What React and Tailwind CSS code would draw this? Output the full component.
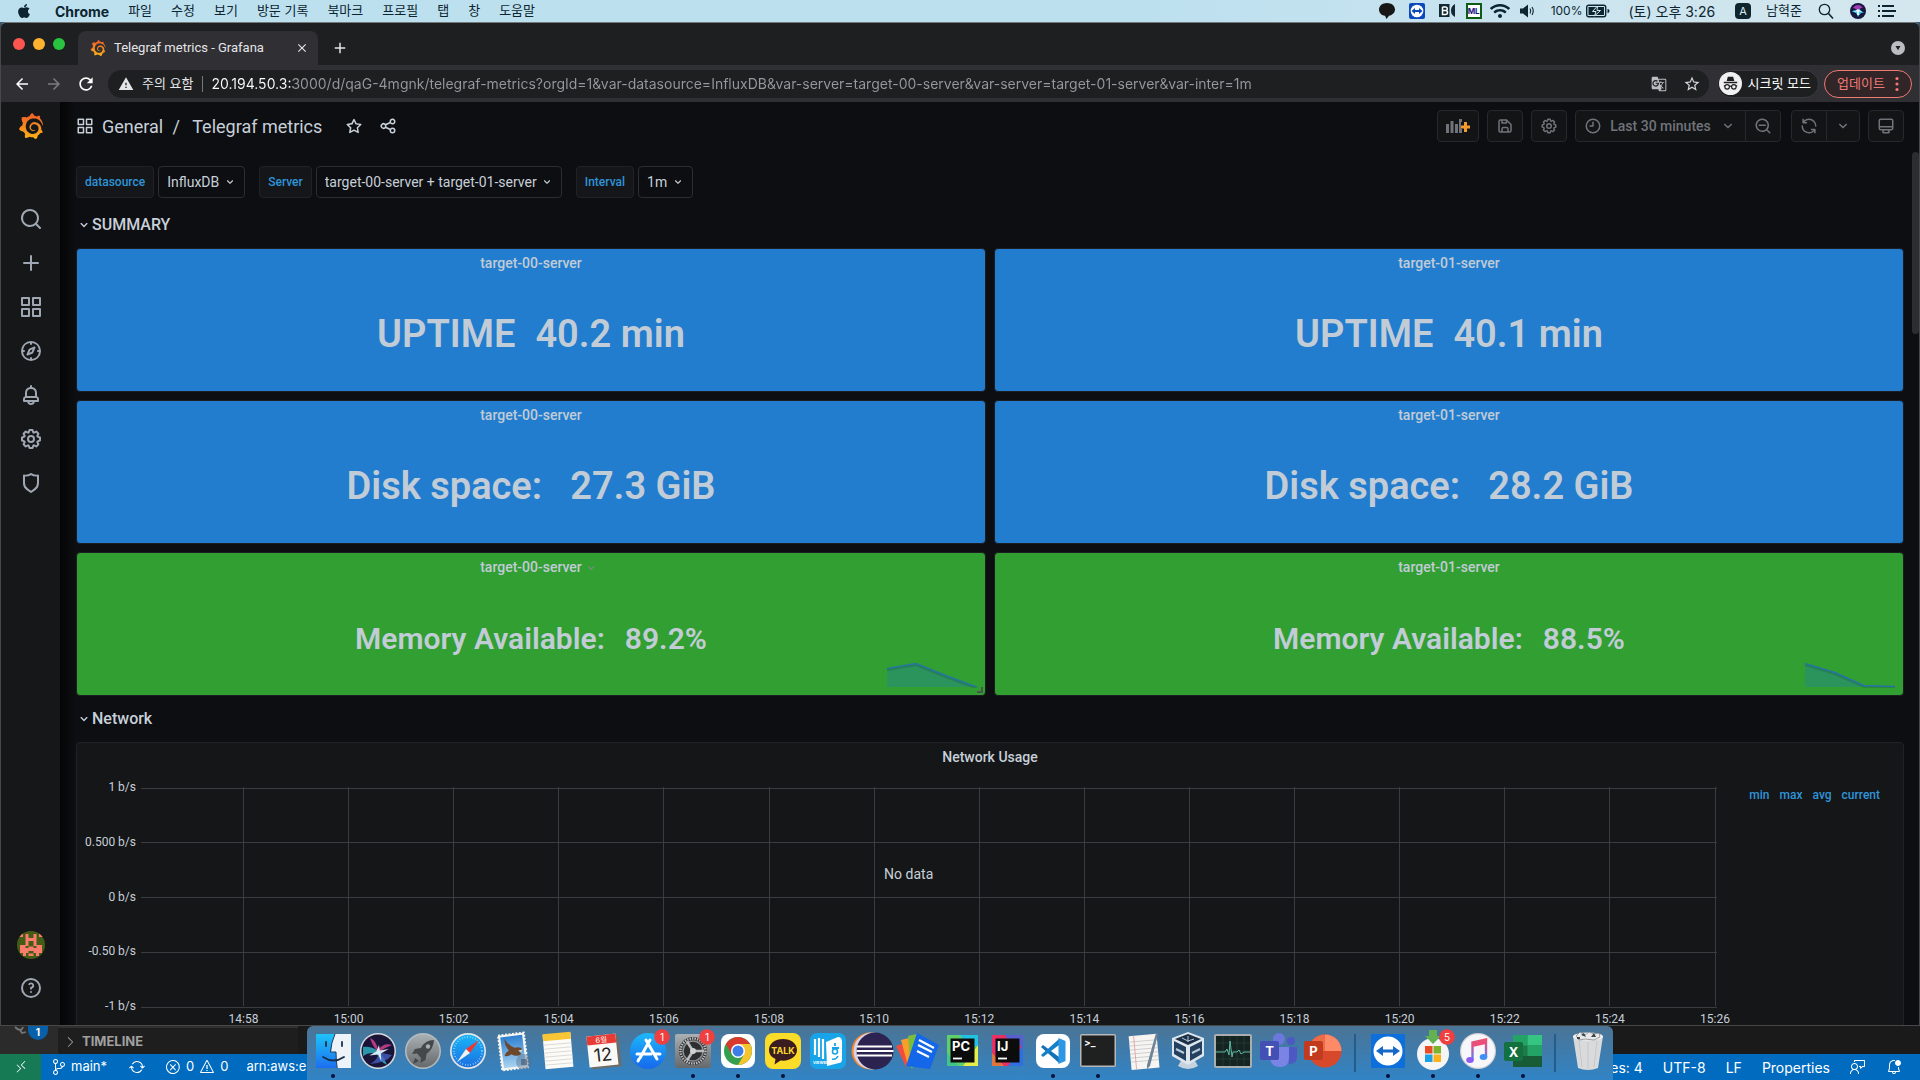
import React from "react";
import { FaApple, FaWifi } from "react-icons/fa";
import { MdGTranslate, MdStarBorder, MdWarning, MdArrowBack, MdArrowForward, MdRefresh, MdClose, MdAdd } from "react-icons/md";
import { SiGrafana } from "react-icons/si";
import { VscRemote, VscSourceControl, VscSync, VscError, VscWarning, VscFeedback, VscBellDot, VscChevronRight } from "react-icons/vsc";

const UI = "font-['Inter','Noto_Sans_CJK_KR',sans-serif]";

const paths = {
  search: "M21.71,20.29,18,16.61A9,9,0,1,0,16.61,18l3.68,3.68a1,1,0,0,0,1.42,0A1,1,0,0,0,21.71,20.29ZM11,18a7,7,0,1,1,7-7A7,7,0,0,1,11,18Z",
  plus: "M19,11H13V5a1,1,0,0,0-2,0v6H5a1,1,0,0,0,0,2h6v6a1,1,0,0,0,2,0V13h6a1,1,0,0,0,0-2Z",
  apps: "M10,13H3a1,1,0,0,0-1,1v7a1,1,0,0,0,1,1h7a1,1,0,0,0,1-1V14A1,1,0,0,0,10,13ZM9,20H4V15H9ZM21,2H14a1,1,0,0,0-1,1v7a1,1,0,0,0,1,1h7a1,1,0,0,0,1-1V3A1,1,0,0,0,21,2ZM20,9H15V4h5Zm1,4H14a1,1,0,0,0-1,1v7a1,1,0,0,0,1,1h7a1,1,0,0,0,1-1V14A1,1,0,0,0,21,13Zm-1,7H15V15h5ZM10,2H3A1,1,0,0,0,2,3v7a1,1,0,0,0,1,1h7a1,1,0,0,0,1-1V3A1,1,0,0,0,10,2ZM9,9H4V4H9Z",
  compass: "M12,2A10,10,0,1,0,22,12,10,10,0,0,0,12,2Zm1,17.93V19a1,1,0,0,0-2,0v.93A8,8,0,0,1,4.07,13H5a1,1,0,0,0,0-2H4.07A8,8,0,0,1,11,4.07V5a1,1,0,0,0,2,0V4.07A8,8,0,0,1,19.93,11H19a1,1,0,0,0,0,2h.93A8,8,0,0,1,13,19.93ZM15.14,7.55l-5,2.12a1,1,0,0,0-.52.52l-2.12,5a1,1,0,0,0,.21,1.1,1,1,0,0,0,.7.3.93.93,0,0,0,.4-.09l5-2.12a1,1,0,0,0,.52-.52l2.12-5a1,1,0,0,0-1.31-1.31Zm-2.49,5.1-2.28,1,1-2.28,2.28-1Z",
  bell: "M18,13.18V10a6,6,0,0,0-5-5.91V3a1,1,0,0,0-2,0V4.09A6,6,0,0,0,6,10v3.18A3,3,0,0,0,4,16v2a1,1,0,0,0,1,1H8.14a4,4,0,0,0,7.72,0H19a1,1,0,0,0,1-1V16A3,3,0,0,0,18,13.18ZM8,10a4,4,0,0,1,8,0v3H8Zm4,10a2,2,0,0,1-1.72-1h3.44A2,2,0,0,1,12,20Zm6-3H6V16a1,1,0,0,1,1-1H17a1,1,0,0,1,1,1Z",
  cog: "M21.32,9.55l-1.89-.63.89-1.78A1,1,0,0,0,20.13,6L18,3.87a1,1,0,0,0-1.15-.19l-1.78.89-.63-1.89A1,1,0,0,0,13.5,2h-3a1,1,0,0,0-.95.68L8.92,4.57,7.14,3.68A1,1,0,0,0,6,3.87L3.87,6a1,1,0,0,0-.19,1.15l.89,1.78-1.89.63A1,1,0,0,0,2,10.5v3a1,1,0,0,0,.68.95l1.89.63-.89,1.78A1,1,0,0,0,3.87,18L6,20.13a1,1,0,0,0,1.15.19l1.78-.89.63,1.89a1,1,0,0,0,.95.68h3a1,1,0,0,0,.95-.68l.63-1.89,1.78.89A1,1,0,0,0,18,20.13L20.13,18a1,1,0,0,0,.19-1.15l-.89-1.78,1.89-.63A1,1,0,0,0,22,13.5v-3A1,1,0,0,0,21.32,9.55ZM20,12.78l-1.2.4A2,2,0,0,0,17.64,16l.57,1.14-1.1,1.1L16,17.64a2,2,0,0,0-2.79,1.16l-.4,1.2H11.22l-.4-1.2A2,2,0,0,0,8,17.64l-1.14.57-1.1-1.1L6.36,16A2,2,0,0,0,5.2,13.18L4,12.78V11.22l1.2-.4A2,2,0,0,0,6.36,8L5.79,6.89l1.1-1.1L8,6.36A2,2,0,0,0,10.82,5.2l.4-1.2h1.56l.4,1.2A2,2,0,0,0,16,6.36l1.14-.57,1.1,1.1L17.64,8a2,2,0,0,0,1.16,2.79l1.2.4ZM12,8a4,4,0,1,0,4,4A4,4,0,0,0,12,8Zm0,6a2,2,0,1,1,2-2A2,2,0,0,1,12,14Z",
  shield: "M19.63,3.65a1,1,0,0,0-.84-.2,8,8,0,0,1-6.22-1.27,1,1,0,0,0-1.14,0A8,8,0,0,1,5.21,3.45a1,1,0,0,0-.84.2A1,1,0,0,0,4,4.43v7.45a9,9,0,0,0,3.77,7.33l3.65,2.6a1,1,0,0,0,1.16,0l3.65-2.6A9,9,0,0,0,20,11.88V4.43A1,1,0,0,0,19.63,3.65ZM18,11.88a7,7,0,0,1-2.93,5.7L12,19.77,8.93,17.58A7,7,0,0,1,6,11.88V5.58a10,10,0,0,0,6-1.39,10,10,0,0,0,6,1.39Z",
  star: "M22,9.67A1,1,0,0,0,21.14,9l-5.69-.83L12.9,3a1,1,0,0,0-1.8,0L8.55,8.16,2.86,9a1,1,0,0,0-.81.68,1,1,0,0,0,.25,1l4.13,4-1,5.68A1,1,0,0,0,6.9,21.44L12,18.77l5.1,2.67a.93.93,0,0,0,.46.12,1,1,0,0,0,.59-.19,1,1,0,0,0,.4-1l-1-5.68,4.13-4A1,1,0,0,0,22,9.67Zm-6.15,4a1,1,0,0,0-.29.88l.72,4.2-3.76-2a1.06,1.06,0,0,0-.94,0l-3.76,2,.72-4.2a1,1,0,0,0-.29-.88l-3-3,4.21-.61a1,1,0,0,0,.76-.55L12,5.7l1.88,3.82a1,1,0,0,0,.76.55l4.21.61Z",
  share: "M18,14a4,4,0,0,0-3.08,1.48l-5.1-2.35a3.64,3.64,0,0,0,0-2.26l5.1-2.35A4,4,0,1,0,14,6a4.17,4.17,0,0,0,.07.71L8.79,9.14a4,4,0,1,0,0,5.72l5.28,2.43A4.17,4.17,0,0,0,14,18a4,4,0,1,0,4-4ZM18,4a2,2,0,1,1-2,2A2,2,0,0,1,18,4ZM6,14a2,2,0,1,1,2-2A2,2,0,0,1,6,14Zm12,6a2,2,0,1,1,2-2A2,2,0,0,1,18,20Z",
  save: "M20.71,9.29l-6-6a1,1,0,0,0-.32-.21A1.09,1.09,0,0,0,14,3H6A3,3,0,0,0,3,6V18a3,3,0,0,0,3,3H18a3,3,0,0,0,3-3V10A1,1,0,0,0,20.71,9.29ZM9,5h4V7H9Zm6,14H9V16a1,1,0,0,1,1-1h4a1,1,0,0,1,1,1Zm4-1a1,1,0,0,1-1,1H17V16a3,3,0,0,0-3-3H10a3,3,0,0,0-3,3v3H6a1,1,0,0,1-1-1V6A1,1,0,0,1,6,5H7V8A1,1,0,0,0,8,9h6a1,1,0,0,0,1-1V6.41l4,4Z",
  sync: "M19.91,15.51H15.38a1,1,0,0,0,0,2h2.4A8,8,0,0,1,4,12a1,1,0,0,0-2,0,10,10,0,0,0,16.88,7.23V21a1,1,0,0,0,2,0V16.5A1,1,0,0,0,19.91,15.51ZM12,2A10,10,0,0,0,5.12,4.77V3a1,1,0,0,0-2,0V7.5a1,1,0,0,0,1,1h4.5a1,1,0,0,0,0-2H6.22A8,8,0,0,1,20,12a1,1,0,0,0,2,0A10,10,0,0,0,12,2Z",
  down: "M17,9.17a1,1,0,0,0-1.41,0L12,12.71,8.46,9.17a1,1,0,0,0-1.41,0,1,1,0,0,0,0,1.42l4.24,4.24a1,1,0,0,0,1.42,0L17,10.59A1,1,0,0,0,17,9.17Z",
  clock: "M12,2A10,10,0,1,0,22,12,10,10,0,0,0,12,2Zm0,18a8,8,0,1,1,8-8A8,8,0,0,1,12,20ZM12,6a1,1,0,0,0-1,1v4H8a1,1,0,0,0,0,2h4a1,1,0,0,0,1-1V7A1,1,0,0,0,12,6Z",
  zoomOut: "M21.71,20.29,18,16.61A9,9,0,1,0,16.61,18l3.68,3.68a1,1,0,0,0,1.42,0A1,1,0,0,0,21.71,20.29ZM11,18a7,7,0,1,1,7-7A7,7,0,0,1,11,18ZM15,10H7a1,1,0,0,0,0,2h8a1,1,0,0,0,0-2Z",
  monitor: "M19,2H5A3,3,0,0,0,2,5V15a3,3,0,0,0,3,3H7.64l-.58,1a2,2,0,0,0,0,2,2,2,0,0,0,1.75,1h6.46A2,2,0,0,0,17,21a2,2,0,0,0,0-2l-.59-1H19a3,3,0,0,0,3-3V5A3,3,0,0,0,19,2ZM8.77,20,10,18H14l1.2,2ZM20,15a1,1,0,0,1-1,1H5a1,1,0,0,1-1-1V14H20Zm0-3H4V5A1,1,0,0,1,5,4H19a1,1,0,0,1,1,1Z",
  help: "M12,2A10,10,0,1,0,22,12,10,10,0,0,0,12,2Zm0,18a8,8,0,1,1,8-8A8,8,0,0,1,12,20Zm-1-4a1,1,0,1,0,2,0a1,1,0,1,0-2,0ZM12,6.5a3,3,0,0,0-2.9,2.1l1.6.6A1.4,1.4,0,0,1,12,8.2a1.3,1.3,0,0,1,0,2.6a.9.9,0,0,0-.9.9V13.5h1.8V12.4A3,3,0,0,0,12,6.5Z",
};

function Icon({ name, className }) {
  return (
    <svg viewBox="0 0 24 24" fill="currentColor" className={className} aria-hidden="true">
      <path d={paths[name]} />
    </svg>
  );
}

/* ---------- macOS menu bar ---------- */

const menus = ["파일", "수정", "보기", "방문 기록", "북마크", "프로필", "탭", "창", "도움말"];

function MenuBar() {
  return (
    <header className={`${UI} flex h-[22px] shrink-0 items-center justify-between bg-[linear-gradient(to_right,#bde0ef_60%,#d5e7ee)] pl-4 pr-6 text-[13px] text-[#0c2530]`}>
      <nav className="flex items-center gap-[19px]">
        <button aria-label="Apple" className="mr-1"><FaApple className="size-4" /></button>
        <button className="text-[14px] font-bold">Chrome</button>
        {menus.map((m) => <button key={m}>{m}</button>)}
      </nav>
      <div className="flex items-center">
        <svg viewBox="0 0 16 16" className="mr-[14px] size-4" aria-label="KakaoTalk"><path fill="#171717" d="M8 0C3.500 0 0 2.800 0 6.500s3 6 6 6.300L7.500 16l2.500-3.300c3.500-.6 6-3 6-6.200C16 2.800 12.500 0 8 0Z" /></svg>
        <svg viewBox="0 0 16 16" className="mr-[14px] size-4" aria-label="TeamViewer"><rect width="16" height="16" rx="2" fill="#0b49bd" /><circle cx="8" cy="8" r="6.300" fill="#fff" /><path d="M2.500 8 6 5v2h4V5l3.500 3L10 11V9H6v2Z" fill="#0b49bd" /></svg>
        <svg viewBox="0 0 16 16" className="mr-[11px] size-4" aria-label="Recorder"><path fill="#122833" d="M0 1h10.500v13H0ZM16 1v13q-4-2-4-6.500T16 1Z" /><path d="M3.500 4v7.500h3a2 2 0 0 0 0-4h-3m3 0a1.700 1.700 0 0 0 0-3.500h-3" fill="none" stroke="#fff" strokeWidth="1.500" /></svg>
        <span className="mr-2 flex size-4 items-center justify-center border-2 border-[#0c5c16] bg-white text-[8px] font-bold leading-none text-[#15158a]">ML</span>
        <FaWifi className="mr-[10px] h-4 w-5" />
        <svg viewBox="0 0 16 16" className="mr-[15px] size-4" aria-label="Volume"><path d="M0 5.500h3L8 1.500v13L3 10.500H0Z" fill="currentColor" /><path d="M10 5.500q1.500 2.500 0 5M12 4q2.500 4 0 8" fill="none" stroke="currentColor" strokeWidth="1.100" /></svg>
        <span className="mr-1 text-[12px]">100%</span>
        <svg viewBox="0 0 24 14" className="mr-[18px] h-[14px] w-6" aria-label="Battery"><rect x=".7" y="1.200" width="19" height="11.600" rx="2" fill="none" stroke="currentColor" strokeWidth="1.400" /><rect x="2.500" y="3" width="15.500" height="8" fill="currentColor" /><path d="M11.500 2 6.500 7.500h3.500L8.500 12l6-5.500h-3.500Z" fill="currentColor" stroke="#d6e7ef" strokeWidth="1" /><path d="M21.500 5v4a2 2 0 0 0 0-4" fill="currentColor" /></svg>
        <span className="mr-5 text-[14px]">(토) 오후 3:26</span>
        <span className="mr-[15px] flex size-4 items-center justify-center rounded-sm bg-[#10242e] text-[11px] leading-none text-[#dbe9f0]">A</span>
        <span className="mr-4">남혁준</span>
        <svg viewBox="0 0 16 16" className="mr-4 size-4" aria-label="Spotlight"><circle cx="6.500" cy="6.500" r="5.200" fill="none" stroke="currentColor" strokeWidth="1.300" /><path d="m10.500 10.500 4.500 5" stroke="currentColor" strokeWidth="1.600" /></svg>
        <svg viewBox="0 0 16 16" className="mr-3 size-4" aria-label="Siri"><circle cx="8" cy="8" r="8" fill="#16163f" /><path d="M2 9c3-4 5 1 7-5 1 4 3 4 5 6-3-1-4 1-6 4-1-4-3-5-6-5Z" fill="#39c6ef" /><path d="M3 5c2-4 8-4 10 0-3-1-4 3-5 3S6 5 3 5Z" fill="#a23db5" /><path d="m4 9 4-3 4 3-3-.5V12H7V8.500Z" fill="#e9f6ff" /></svg>
        <svg viewBox="0 0 18 14" className="h-[14px] w-[18px]" aria-label="Notification Center"><path d="M0 2h2M4 2h12M0 7h2M4 7h14M0 12h2M4 12h12" stroke="currentColor" strokeWidth="1.800" /></svg>
      </div>
    </header>
  );
}

/* ---------- Chrome window ---------- */

const url = "20.194.50.3:3000/d/qaG-4mgnk/telegraf-metrics?orgId=1&var-datasource=InfluxDB&var-server=target-00-server&var-server=target-01-server&var-inter=1m";

function TabStrip() {
  return (
    <div className="flex h-[42px] shrink-0 items-end bg-[#1e1f21] text-[#e4e5e7]">
      <div className="mb-[15px] ml-3 flex gap-2">
        <button aria-label="Close window" className="size-3 rounded-full bg-[#fe5550]" />
        <button aria-label="Minimize window" className="size-3 rounded-full bg-[#fdb32f]" />
        <button aria-label="Zoom window" className="size-3 rounded-full bg-[#28c440]" />
      </div>
      <div className="ml-[13px] flex h-[34px] w-[240px] items-center rounded-t-lg bg-[#302f34] pl-3 pr-[9px]">
        <SiGrafana className="size-4" fill="url(#grafana)" />
        <span className="ml-2 flex-1 whitespace-nowrap font-['Roboto',sans-serif] text-[13px]">Telegraf metrics - Grafana</span>
        <button aria-label="Close tab"><MdClose className="size-[14px]" /></button>
      </div>
      <button aria-label="New tab" className="mb-2 ml-[13px]"><MdAdd className="size-[18px]" /></button>
      <button aria-label="Search tabs" className="mb-[10px] ml-auto mr-[14px] flex size-[14px] items-center justify-center rounded-full bg-[#bcbdc1]">
        <svg viewBox="0 0 8 6" className="h-[5px] w-2"><path d="M1 0h6L4 5Z" fill="#1e1f21" /></svg>
      </button>
    </div>
  );
}

function AddressBar() {
  return (
    <div className={`${UI} flex h-[37px] shrink-0 items-center bg-[#302f34] pl-3 pr-[7px] text-white`}>
      <button aria-label="Back" className="mr-[14px]"><MdArrowBack className="size-[18px]" /></button>
      <button aria-label="Forward" className="mr-[13px] text-[#7c7c80]"><MdArrowForward className="size-[18px]" /></button>
      <button aria-label="Reload" className="mr-3"><MdRefresh className="size-5" /></button>
      <div className="flex h-7 flex-1 items-center rounded-full bg-[#1e1f21] pl-[10px] pr-2">
        <MdWarning className="mr-2 size-4 text-[#e4e5e7]" />
        <span className="whitespace-nowrap text-[13px] text-[#e4e5e7]">주의 요함</span>
        <span className="ml-2 mr-[9px] h-4 w-px bg-[#77787b]" />
        <input
          aria-label="Address"
          defaultValue={url}
          className="h-5 min-w-0 flex-1 bg-[linear-gradient(to_right,#ffffff_81px,#97989c_81px)] bg-clip-text text-[14px] text-transparent outline-none"
        />
        <button aria-label="Translate" className="mr-4"><MdGTranslate className="size-4 text-[#bcbdc1]" /></button>
        <button aria-label="Bookmark"><MdStarBorder className="size-[18px] text-[#d4d5d8]" /></button>
      </div>
      <div className="ml-2 flex h-7 items-center rounded-full border border-[#3a3a3e] bg-[#1e1f21] pl-px pr-[7px] text-[13px]">
        <svg viewBox="0 0 24 24" className="mr-[6px] size-[23px]" aria-hidden="true">
          <circle cx="12" cy="12" r="12" fill="#f1f1f3" />
          <path d="M8 9.500 9.200 5h5.600L16 9.500ZM5 10.300h14v1.400H5Z" fill="#1e1f21" />
          <g fill="none" stroke="#1e1f21" strokeWidth="1.200"><circle cx="8.500" cy="15.500" r="2.400" /><circle cx="15.500" cy="15.500" r="2.400" /><path d="M10.900 15.200q1.100-.8 2.200 0M5 14.500h1.200M19 14.500h-1.200" /></g>
        </svg>
        시크릿 모드
      </div>
      <button className="ml-[5px] flex h-7 w-[88px] items-center justify-between rounded-full border border-[#ee7a72] bg-[#312528] pl-3 pr-3 text-[13px] text-[#ee7a72]">
        업데이트
        <svg viewBox="0 0 4 16" className="h-4 w-1"><g fill="currentColor"><circle cx="2" cy="2.500" r="1.600" /><circle cx="2" cy="8" r="1.600" /><circle cx="2" cy="13.500" r="1.600" /></g></svg>
      </button>
    </div>
  );
}

/* ---------- Grafana ---------- */

const navItems = [
  ["search", "Search"], ["plus", "Create"], ["apps", "Dashboards"], ["compass", "Explore"],
  ["bell", "Alerting"], ["cog", "Configuration"], ["shield", "Server Admin"],
];

function SideMenu() {
  return (
    <aside className="flex w-[59px] shrink-0 flex-col items-center bg-[#161719] pb-[25px] pt-[11px] text-[#9fa7b3]">
      <a href="#home" aria-label="Home"><SiGrafana className="size-[26px]" fill="url(#grafana)" /></a>
      <nav className="mt-[68px] flex flex-col gap-5">
        {navItems.map(([icon, label]) => (
          <a key={icon} href={`#${icon}`} aria-label={label}><Icon name={icon} className="size-6" /></a>
        ))}
      </nav>
      <div className="mt-auto flex flex-col items-center gap-[17px]">
        <svg viewBox="0 0 28 28" className="size-7" aria-label="Profile">
          <defs><clipPath id="av"><circle cx="14" cy="14" r="14" /></clipPath></defs>
          <g clipPath="url(#av)">
            <rect width="28" height="28" fill="#455c17" />
            <path fill="#f97c6d" d="M2 3h4v3H2ZM22 3h4v3h-4ZM8.500 3h3v4h5V3h3v12h-3v-5h-5v5h-3ZM3 14h5.500v3h3v-1.500h5V17h3v-3H25v8h-3v3h-3v-3h-2.500v-2h-5v2H9v3H6v-3H3ZM11.500 22.500h5V25h-5Z" />
          </g>
        </svg>
        <a href="#help" aria-label="Help"><Icon name="help" className="size-6" /></a>
      </div>
    </aside>
  );
}

const tool = "flex h-8 items-center justify-center border border-[#25282c] bg-[#131416]";

function DashboardHeader() {
  return (
    <div className="flex items-center justify-between pt-2 text-[#c7d0d9]">
      <div className="flex items-center text-[18px]">
        <Icon name="apps" className="mr-2 size-[18px]" />
        <a href="#general">General</a>
        <span className="ml-[6px] mr-[9px] w-[14px] text-center">/</span>
        <a href="#dashboard" className="mr-[23px]">Telegraf metrics</a>
        <button aria-label="Mark as favorite" className="mr-4"><Icon name="star" className="size-[18px]" /></button>
        <button aria-label="Share dashboard"><Icon name="share" className="size-[18px]" /></button>
      </div>
      <div className="flex gap-2 text-[#707379]">
        <button aria-label="Add panel" className={`${tool} w-[42px] rounded-sm`}>
          <svg viewBox="0 0 24 16" className="h-4 w-6">
            <path d="M0 6h3v9H0ZM4.500 3h3v12h-3ZM9 6h3v9H9ZM13 1h3v3h-1v7h1v4h-3Z" fill="currentColor" />
            <path d="M18 4h3v3.500h3.500v3H21V14h-3v-3.500h-3v-3h3Z" fill="#f59b2e" />
          </svg>
        </button>
        <button aria-label="Save dashboard" className={`${tool} w-9 rounded-sm`}><Icon name="save" className="size-[18px]" /></button>
        <button aria-label="Dashboard settings" className={`${tool} w-9 rounded-sm`}><Icon name="cog" className="size-[18px]" /></button>
        <div className="flex">
          <button className={`${tool} w-[171px] rounded-l-sm text-[14px] font-medium`}>
            <Icon name="clock" className="mr-2 size-[18px]" />Last 30 minutes<Icon name="down" className="ml-2 size-[18px]" />
          </button>
          <button aria-label="Zoom out" className={`${tool} -ml-px w-9 rounded-r-sm`}><Icon name="zoomOut" className="size-[18px]" /></button>
        </div>
        <div className="ml-[2px] flex">
          <button aria-label="Refresh" className={`${tool} w-9 rounded-l-sm`}><Icon name="sync" className="size-[18px]" /></button>
          <button aria-label="Refresh interval" className={`${tool} -ml-px w-[34px] rounded-r-sm`}><Icon name="down" className="size-[18px]" /></button>
        </div>
        <button aria-label="Cycle view mode" className={`${tool} w-9 rounded-sm`}><Icon name="monitor" className="size-[18px]" /></button>
      </div>
    </div>
  );
}

function Variable({ id, label, value }) {
  return (
    <div className="flex gap-1">
      <label htmlFor={id} className="flex h-8 items-center rounded-sm border border-[#202226] bg-[#141619] px-2 text-[12px] font-medium text-[#2f94d8]">{label}</label>
      <div className="relative flex items-center">
        <select id={id} className="h-8 appearance-none rounded-sm border border-[#2b2e33] bg-[#0d0e11] pl-2 pr-6 text-[14px] text-[#c7d0d9]">
          <option>{value}</option>
        </select>
        <Icon name="down" className="pointer-events-none absolute right-2 size-[14px] text-[#c7d0d9]" />
      </div>
    </div>
  );
}

function RowTitle({ children }) {
  return (
    <h2>
      <button className="flex h-6 items-center text-[16px] font-medium text-[#c7d0d9]">
        <Icon name="down" className="size-4" />{children}
      </button>
    </h2>
  );
}

function Stat({ title, prefix, value, gap, size, color, spark, hovered }) {
  return (
    <section className={`relative flex h-36 flex-col rounded-sm border border-[#1b1d20] text-[#c1ccd6] ${color}`}>
      <h3 className="mt-1 flex h-5 items-center justify-center text-[14px] font-medium">
        <span className="relative">
          {title}
          {hovered && <Icon name="down" className="absolute -right-4 top-1 size-[14px] text-[#7b8b86]" />}
        </span>
      </h3>
      <div className={`flex flex-1 items-center justify-center pt-1 font-semibold ${gap} ${size}`}>
        <span>{prefix}</span><span>{value}</span>
      </div>
      {spark && (
        <svg viewBox="0 0 90 26" className="absolute bottom-[7px] right-2 h-[26px] w-[90px]" aria-hidden="true">
          <path d={`${spark} L90 25 L0 25Z`} fill="#1f78c1" fillOpacity=".3" />
          <path d={spark} transform="translate(0 1.500)" fill="none" stroke="#1f5a4a" strokeOpacity=".35" strokeWidth="2" />
          <path d={spark} fill="none" stroke="#2377a0" strokeWidth="1.500" />
        </svg>
      )}
      {hovered && <span className="absolute bottom-[2px] right-[2px] size-[6px] border-b-2 border-r-2 border-[#47584a]" />}
    </section>
  );
}

const blue = "bg-[#227dcf]";
const green = "bg-[#319f31]";
const stats = [
  { title: "target-00-server", prefix: "UPTIME", value: "40.2 min", gap: "gap-5", size: "text-[38px]", color: blue },
  { title: "target-01-server", prefix: "UPTIME", value: "40.1 min", gap: "gap-5", size: "text-[38px]", color: blue },
  { title: "target-00-server", prefix: "Disk space:", value: "27.3 GiB", gap: "gap-7", size: "text-[38px]", color: blue },
  { title: "target-01-server", prefix: "Disk space:", value: "28.2 GiB", gap: "gap-7", size: "text-[38px]", color: blue },
  { title: "target-00-server", prefix: "Memory Available:", value: "89.2%", gap: "gap-5", size: "text-[30px]", color: green, spark: "M0 6.500 L29 1.500 L60 14 L90 25", hovered: true },
  { title: "target-01-server", prefix: "Memory Available:", value: "88.5%", gap: "gap-5", size: "text-[30px]", color: green, spark: "M0 1.500 L30 10.500 L59 23.500 L90 24.500" },
];

const yTicks = ["1 b/s", "0.500 b/s", "0 b/s", "-0.50 b/s", "-1 b/s"];
const xTicks = ["14:58", "15:00", "15:02", "15:04", "15:06", "15:08", "15:10", "15:12", "15:14", "15:16", "15:18", "15:20", "15:22", "15:24", "15:26"];

function NetworkPanel() {
  return (
    <section className="rounded-sm border border-[#202226] bg-[#151618] text-[#c7d0d9]">
      <h3 className="mt-1 flex h-5 items-center justify-center text-[14px] font-medium">Network Usage</h3>
      <div className="flex pt-5">
        <div className="-mt-[8px] flex h-[235px] w-[59px] flex-col justify-between text-right text-[12px] leading-4">
          {yTicks.map((t) => <span key={t}>{t}</span>)}
        </div>
        <svg className="ml-[5px] h-[300px] min-w-0 flex-1 overflow-visible" role="img" aria-label="Network Usage, no data">
          <g stroke="#3b3c3f" strokeWidth="1" shapeRendering="crispEdges">
            {yTicks.map((t, i) => <line key={t} x1="0" x2="100%" y1={i * 55 - (i > 0 ? 1 : 0) + 1} y2={i * 55 - (i > 0 ? 1 : 0) + 1} />)}
            {xTicks.map((t, i) => {
              const x = `${6.5 + i * 6.668}%`;
              return <line key={t} x1={x} x2={x} y1="0" y2="219" />;
            })}
          </g>
          <g fill="#c7d0d9" fontSize="12" textAnchor="middle">
            {xTicks.map((t, i) => <text key={t} x={`${6.5 + i * 6.668}%`} y="236">{t}</text>)}
            <text x="48.7%" y="92" fontSize="14">No data</text>
          </g>
        </svg>
        <table className="mb-auto ml-[26px] mr-[19px] text-[12px] font-medium leading-4 text-[#2f94d8]">
          <thead>
            <tr>{["min", "max", "avg", "current"].map((c) => <th key={c} className="pr-1 pl-[6px] font-medium">{c}</th>)}</tr>
          </thead>
        </table>
      </div>
    </section>
  );
}

function Grafana() {
  return (
    <div className="flex min-h-0 flex-1 overflow-hidden bg-[#0d0e11] font-['Roboto',sans-serif]">
      <SideMenu />
      <main className="relative min-w-0 flex-1 bg-[linear-gradient(to_right,#050506,#0d0e11_16px)] pl-4 pr-[15px]">
        <DashboardHeader />
        <div className="mt-6 flex gap-[14px]">
          <Variable id="ds" label="datasource" value="InfluxDB" />
          <Variable id="server" label="Server" value="target-00-server + target-01-server" />
          <Variable id="interval" label="Interval" value="1m" />
        </div>
        <div className="mb-[11px] mt-[15px]"><RowTitle>SUMMARY</RowTitle></div>
        <div className="grid grid-cols-2 gap-2">
          {stats.map((s) => <Stat key={s.title + s.prefix} {...s} />)}
        </div>
        <div className="mb-[11px] mt-[11px]"><RowTitle>Network</RowTitle></div>
        <NetworkPanel />
        <div className="absolute right-0 top-[50px] h-[182px] w-[7px] rounded-sm bg-[#2a2e31]" />
      </main>
    </div>
  );
}

/* ---------- VS Code strip behind the browser ---------- */

function CodeWindow() {
  return (
    <footer className={`${UI} shrink-0 text-[14px] text-white`}>
      <div className="flex h-7 bg-[#1a1a1a]">
        <div className="flex w-[58px] justify-end bg-[#2b2b2b] pr-[10px]">
          <svg viewBox="0 0 14 9" className="h-[9px] w-[14px]" aria-hidden="true"><path d="M1 1q3 3 5 3t3-3M6 4l2 3 4-1" fill="none" stroke="#767676" strokeWidth="1.800" /></svg>
          <span className="flex h-[14px] w-5 items-end justify-center rounded-b-full bg-[#0860a8] pb-[3px] text-[10px] font-bold leading-none">1</span>
        </div>
        <div className="w-60 border-t-2 border-[#303031] bg-[#1e1e1f] text-[#a0a0a0]">
          <button className="ml-1 flex h-[28px] items-center gap-1 text-[13px] font-bold"><VscChevronRight className="size-4" />TIMELINE</button>
        </div>
      </div>
      <div className="flex h-[26px] items-center justify-between bg-[#006bbf]">
        <div className="flex h-full items-center">
          <button aria-label="Remote window" className="flex h-full w-[41px] items-center justify-center bg-[#167a54]"><VscRemote className="size-[14px]" /></button>
          <button className="ml-[10px] flex items-center gap-1 text-[13px]"><VscSourceControl className="size-4" />main*</button>
          <button aria-label="Synchronize" className="ml-[22px]"><VscSync className="size-4" /></button>
          <button className="ml-5 flex items-center gap-[5px] text-[13px]"><VscError className="size-4" />0<VscWarning className="size-4" />0</button>
          <span className="ml-[18px] text-[13px]">arn:aws:e</span>
        </div>
        <div className="flex items-center gap-5 pr-[18px]">
          <span>es: 4</span>
          <button>UTF-8</button>
          <button>LF</button>
          <button>Properties</button>
          <button aria-label="Feedback"><VscFeedback className="size-4" /></button>
          <button aria-label="Notifications"><VscBellDot className="size-4" /></button>
        </div>
      </div>
    </footer>
  );
}

/* ---------- Dock ---------- */

function Badge({ n }) {
  return (
    <>
      <circle cx="34" cy="6" r="7.800" fill="#ef3f3f" />
      <text x="34" y="9.500" fill="#fff" fontSize="10" textAnchor="middle">{n}</text>
    </>
  );
}

function JetBrains({ label, fill }) {
  return (
    <>
      <rect x="4" y="4" width="31" height="31" fill={fill[0]} />
      <path d="M17 4h18v12L22 12Z" fill={fill[1]} />
      <path d="M35 14v21H20Z" fill={fill[2]} />
      <path d="M4 22l12 13H4Z" fill={fill[3]} />
      <rect x="7.500" y="7.500" width="24" height="24" fill="#0c0c0c" />
      <text x="9" y="20" fill="#fff" fontSize="13" fontWeight="700">{label}</text>
      <path d="M10 27.500h9" stroke="#fff" strokeWidth="1.800" />
    </>
  );
}

const apps = [
  { name: "Finder", open: true, art: <><rect x="3" y="3" width="35" height="34" fill="#eef3f9" /><path d="M3 3h19q-4 8-4 18h5q0 8 1 16H3Z" fill="url(#finder)" /><path d="M22 3q-4 9-4.500 18H23q0 8 1.200 16" fill="none" stroke="#1b3a5c" strokeWidth="1" /><path d="M10 26q10.500 7 21 0M13 11v4M29 11v4" fill="none" stroke="#14304d" strokeWidth="1.800" strokeLinecap="round" /></> },
  { name: "Siri", art: <><circle cx="20" cy="20" r="18" fill="#d9dadd" /><circle cx="20" cy="20" r="16.500" fill="#1a1538" /><path d="M5 16q8-1 15 4 6 6 9 14-8-4-10-11Q12 20 5 25Z" fill="#2fb8c8" opacity=".8" /><path d="M12 7q6 2 8 12 6-8 14-5-6 2-13 7-6-4-9-14Z" fill="#d0418f" opacity=".85" /><path d="M12 33q8-4 9-12 6 2 13 3-6 8-22 9Z" fill="#4a62cc" opacity=".75" /><path d="m21 14 .8 5.500 9-1.500-8 4.500.5 8-3-7-9 1 7-4Z" fill="#eafcff" opacity=".9" /></> },
  { name: "Launchpad", art: <><circle cx="20" cy="20" r="18" fill="#b4bbbf" /><circle cx="20" cy="20" r="16.500" fill="url(#gray)" /><path d="M31 9q-9 0-13 8l-6 1-3 5 5-.500 4 4.500-.5 5 5-3 1-6q7-5 7.500-14ZM12 27l-2 6 6-3Z" fill="#44484a" /><circle cx="25" cy="15.500" r="2.200" fill="#a8aeb1" /></> },
  { name: "Safari", art: <><circle cx="20" cy="20" r="18" fill="#e3e5e7" /><circle cx="20" cy="20" r="16.300" fill="url(#safari)" /><circle cx="20" cy="20" r="14" fill="none" stroke="#bfe6ff" strokeWidth="1.800" strokeDasharray=".6 2.100" /><path d="M31 9 22 22l-4-4Z" fill="#f3362c" /><path d="m9 31 9-13 4 4Z" fill="#f2f2f2" /></> },
  { name: "Mail", art: <><g transform="rotate(-7 20 20)"><rect x="7" y="3" width="26" height="35" fill="#f8f6f0" stroke="#f8f6f0" strokeWidth="2" strokeDasharray="2 1.500" /><rect x="9" y="5" width="22" height="31" fill="url(#sky)" /><path d="M13 7q-1 7 3 12-3 1-5 5 4 1 7-1 5 4 10 1l-2-3q3-1 3-3-4-2-7-1-6-3-9-10Z" fill="#6d4729" /><path d="m25 20 4 0-1 2Z" fill="#f4e6cf" /></g><circle cx="31" cy="31" r="8" fill="#56728f" opacity=".45" /><rect x="28" y="28" width="6" height="6" fill="#31465d" opacity=".5" /></> },
  { name: "Notes", art: <g transform="rotate(-5 20 20)"><rect x="6" y="3" width="28" height="34" fill="#fcfbf7" /><rect x="6" y="2" width="28" height="7" fill="#f8c537" /><path d="M6 13h28M6 17h28M6 21h28M6 25h28M6 29h28M6 33h28" stroke="#d5d4cf" strokeWidth=".8" /></g> },
  { name: "Calendar", art: <g transform="rotate(-6 20 20)"><rect x="7" y="6" width="30" height="31" fill="#6d6c68" /><rect x="5" y="4" width="29" height="31" fill="#faf9f6" /><rect x="5" y="4" width="29" height="9" fill="#e63c35" /><text x="19.500" y="11.500" fill="#fff" fontSize="7.500" textAnchor="middle">6월</text><text x="19.500" y="30" fill="#222" fontSize="18" textAnchor="middle">12</text></g> },
  { name: "App Store", art: <><circle cx="20" cy="20" r="18" fill="url(#appstore)" /><path d="m22 9-10 18M18 9l11 19M9 23h14M27 23h5M11 28l-1 2" stroke="#fff" strokeWidth="3" strokeLinecap="round" /><Badge n="1" /></> },
  { name: "System Preferences", open: true, art: <><rect x="2" y="3" width="36" height="34" rx="2" fill="url(#gray)" /><circle cx="20" cy="20" r="14" fill="#2d2e30" /><circle cx="20" cy="20" r="12.500" fill="none" stroke="#b9bbbd" strokeWidth="2.500" strokeDasharray="1.500 1" /><circle cx="20" cy="20" r="10" fill="none" stroke="#8e9092" strokeWidth="1.500" /><path d="M20 20h11M20 20l-6-9.500M20 20l-6 9.500" stroke="#b9bbbd" strokeWidth="2.600" /><circle cx="20" cy="20" r="3" fill="#d0d1d3" /><Badge n="1" /></> },
  { name: "Google Chrome", open: true, art: <><rect x="3" y="3" width="34" height="34" rx="8" fill="#fff" /><circle cx="20" cy="20" r="14" fill="#34a04f" /><path d="M20 20 7.900 13A14 14 0 0 1 32.100 13Z" fill="#d93a2e" /><path d="M20 13h12.100A14 14 0 0 1 20 34l6.100-10.500Z" fill="#f6c42c" /><path d="m7.900 13 6 10.500L20 13Z" fill="#d93a2e" /><circle cx="20" cy="20" r="7" fill="#fff" /><circle cx="20" cy="20" r="5.500" fill="#3d7de8" /></> },
  { name: "KakaoTalk", open: true, art: <><rect x="2" y="2" width="36" height="36" rx="8" fill="#fbdc28" /><path d="M20 8C12 8 6 12.500 6 19c0 4.500 3 7.500 6.500 9l-1 5.500 6-4c9.500 1 16.500-4 16.500-10.500S28 8 20 8Z" fill="#3a1d20" /><text x="20" y="23" fill="#fbdc28" fontSize="9" fontWeight="700" textAnchor="middle">TALK</text></> },
  { name: "Viewer", art: <><rect x="2" y="2" width="36" height="36" rx="7" fill="#18a4e8" /><path d="M7 8v16M11 7v19M15 8v20" stroke="#fff" strokeWidth="2.200" /><path d="m18 11 12-5q4 0 4 5v17q0 4-3 4l-12 3Z" fill="#fff" /><path d="M27 12v3M24 17h7" stroke="#18a4e8" strokeWidth="1.800" /><circle cx="27" cy="20.500" r="2.500" fill="none" stroke="#18a4e8" strokeWidth="1.600" /><path d="M24 28q4 1 6-3" stroke="#18a4e8" strokeWidth="1.600" fill="none" /><text x="5" y="33" fill="#fff" fontSize="4" fontWeight="700">VIEWER</text></> },
  { name: "Eclipse", art: <><circle cx="17" cy="20" r="18.500" fill="#f3882c" /><circle cx="19" cy="20" r="18.500" fill="#d9d4e8" /><circle cx="22" cy="20" r="18.500" fill="#2c2350" /><path d="M4 15.500h35M3.500 20h37M4 24.500h35" stroke="#fff" strokeWidth="2" /></> },
  { name: "Documents", art: <><path d="m-2 15 6-2 8 19-4 4Z" fill="#f04d3e" /><path d="m3 9 8-2 5 26-6 2Z" fill="#f79f2a" /><path d="m10 5 9-2 3 31-9 3Z" fill="#79bf3a" /><path d="m19 2 22 12-9 24-24-3Z" fill="#1467e8" /><path d="m21 9 15 8M20 14l14 7M19 20l12 6" stroke="#fff" strokeWidth="2" /></> },
  { name: "PyCharm", art: <JetBrains label="PC" fill={["#5fcf6c", "#22c3e0", "#e6ee4c", "#3fc48a"]} /> },
  { name: "IntelliJ IDEA", art: <JetBrains label="IJ" fill={["#e92f63", "#5a5fd0", "#2f6fe0", "#e0763c"]} /> },
  { name: "Visual Studio Code", open: true, art: <><rect x="3" y="3" width="34" height="34" rx="8" fill="#fff" /><path d="m8 16 2-2 16 12v6Z" fill="#1071b8" /><path d="m8 24 2 2 16-12V8Z" fill="#1480c9" /><path d="m25.500 7 7 3v20l-7 3Z" fill="#2d97e3" /></> },
  { name: "Terminal", open: true, art: <><rect x="2" y="3" width="36" height="33" rx="2" fill="#b8b9b6" /><rect x="3.500" y="4.500" width="33" height="30" fill="#1f2020" /><text x="6" y="15" fill="#f3f3f3" fontSize="10" fontWeight="700">&gt;_</text></> },
  { name: "TextEdit", art: <><g transform="rotate(-5 20 20)"><rect x="7" y="4" width="28" height="34" fill="#f6f5f2" /><path d="M7 10h28M7 14h28M7 18h28M7 22h28M7 26h28M7 30h28" stroke="#bfc1c4" strokeWidth=".7" /><path d="M12 4v34" stroke="#e59b9b" strokeWidth=".8" /></g><path d="m33 2 2 1-8 32-3 3v-4Z" fill="#6f8296" /></> },
  { name: "VirtualBox", art: <><path d="m14 28-4 7q10 6 20 0l-4-7Z" fill="#c6d2dd" /><path d="M20 1 36 7v18L20 34 4 25V7Z" fill="#dde5ed" /><path d="m20 3 13 5-13 6L7 8Z" fill="#1c3048" /><path d="m14 7 6 3 6-2M20 5v6" stroke="#b9cbdc" fill="none" /><path d="m6 10 12 6v14L6 23ZM34 10l-12 6v14l12-7Z" fill="#24405f" /><path d="m8 18 8 4M24 22l8-4" stroke="#b9cbdc" strokeWidth="2" /></> },
  { name: "Activity Monitor", art: <><rect x="1" y="3" width="38" height="34" rx="2" fill="#a9adad" /><rect x="3" y="5" width="34" height="30" fill="#152421" /><path d="M3 12h34M3 20h34M3 28h34M10 5v30M17 5v30M24 5v30M31 5v30" stroke="#27413b" strokeWidth=".7" /><path d="M3 21h9l2-3 2 6 1-14 2 16 1-5h4l2-2 2 4 3-2h6" fill="none" stroke="#5cb8a2" strokeWidth="1" /></> },
  { name: "Teams", art: <><circle cx="21" cy="8" r="6" fill="#6d78dd" /><circle cx="33" cy="10" r="4" fill="#4d58c3" /><path d="M28 16h11v10q0 7-8 7Z" fill="#4d58c3" /><path d="M12 16h19v11q0 9-9 9t-10-9Z" fill="#7a84e4" /><rect x="2" y="10" width="19" height="19" rx="2" fill="#4450b4" /><text x="11.500" y="24.500" fill="#fff" fontSize="13" fontWeight="700" textAnchor="middle">T</text></> },
  { name: "PowerPoint", art: <><circle cx="22" cy="20" r="16.500" fill="#d8482a" /><path d="M22 3.500A16.500 16.500 0 0 1 38.500 20H22Z" fill="#ff8a68" /><path d="M22 3.500A16.500 16.500 0 0 0 5.500 20H22Z" fill="#ed6c47" /><rect x="1" y="10" width="19" height="19" rx="2" fill="#c33b1f" /><text x="10.500" y="24.500" fill="#fff" fontSize="13" fontWeight="700" textAnchor="middle">P</text></> },
  null,
  { name: "TeamViewer", open: true, art: <><rect x="3" y="3" width="34" height="34" rx="1" fill="#0d6fdb" /><circle cx="20" cy="20" r="14.500" fill="#fff" /><path d="m8 20 7-5v3.500h10V15l7 5-7 5v-3.500H15V25Z" fill="#1769c9" /></> },
  { name: "Microsoft AutoUpdate", open: true, art: <><circle cx="20" cy="23" r="16" fill="#f5f5f5" /><rect x="12" y="15" width="7.500" height="7.500" fill="#ea4a24" /><rect x="20.500" y="15" width="7.500" height="7.500" fill="#7db32a" /><rect x="12" y="23.500" width="7.500" height="7.500" fill="#1da1e6" /><rect x="20.500" y="23.500" width="7.500" height="7.500" fill="#fbb01c" /><path d="M16 -1h8v6h4l-8 8-8-8h4Z" fill="#62b152" /><Badge n="5" /></> },
  { name: "Music", open: true, art: <><circle cx="20" cy="20" r="18" fill="#d2d2d6" /><circle cx="20" cy="20" r="16.800" fill="#f7f7f9" /><path d="M14.500 29V11.500L28 8.500V26" fill="none" stroke="url(#music)" strokeWidth="2.400" /><path d="M14.500 12 28 9v4l-13.500 3Z" fill="#ee4d78" /><ellipse cx="12" cy="29" rx="3.800" ry="3" fill="#8f5cf0" /><ellipse cx="25.500" cy="26" rx="3.800" ry="3" fill="#3f90f5" /></> },
  { name: "Excel", open: true, art: <><rect x="10" y="4" width="29" height="32" rx="1" fill="#1f7a48" /><path d="M10 4h14.500v10.500H10Z" fill="#23a366" /><path d="M24.500 4H39v10.500H24.500Z" fill="#35c481" /><path d="M24.500 14.500H39V25H24.500Z" fill="#23a366" /><path d="M10 25h29v11H10Z" fill="#185c37" /><rect x="1" y="11" width="19" height="19" rx="2" fill="#12713f" /><text x="10.500" y="25.500" fill="#fff" fontSize="13" fontWeight="700" textAnchor="middle">X</text></> },
  null,
  { name: "Trash", art: <><path d="M5 5h30l-5 32q-10 4-20 0Z" fill="#d9dadb" /><path d="m11 10 3 26M20 11v27M29 10l-3 26" stroke="#c6c7c9" strokeWidth="1" fill="none" /><ellipse cx="20" cy="5.500" rx="15" ry="4" fill="#f2f2f2" /><path d="m8 5 4-4 5 3 4-3 5 2 5-1 1 4-6 3-9-1-6 1Z" fill="#e9e9e9" stroke="#777" strokeWidth=".7" /><path d="m13 4 3-2 2 4ZM23 6l3-4 2 4ZM9 6h3v2H9Z" fill="#37454b" /></> },
];

function Dock() {
  return (
    <nav aria-label="Dock" className="absolute bottom-0 left-1/2 flex h-[54px] -translate-x-1/2 rounded-t-md bg-[linear-gradient(to_bottom,#4b7495,#3184c6)] px-[3px] font-['Inter','Noto_Sans_CJK_KR',sans-serif]">
      {apps.map((a, i) =>
        a ? (
          <button key={a.name} aria-label={a.name} className="flex w-[45px] flex-col items-center pt-[5px]">
            <svg viewBox="0 0 40 40" className="size-[40px] overflow-visible">{a.art}</svg>
            {a.open && <span className="mt-[3px] size-1 rounded-full bg-[#06103a]" />}
          </button>
        ) : (
          <span key={i} className="mx-[9px] my-2 w-[2px] bg-[#235d8e]" />
        )
      )}
    </nav>
  );
}

function Gradients() {
  const grads = {
    grafana: ["#f05a28", "#fbb316"], finder: ["#1fc3f8", "#1c6ff0"], gray: ["#aab0b3", "#66696b"],
    safari: ["#19b6f8", "#1b6fe0"], sky: ["#2e7fd0", "#a9d3f0"], appstore: ["#1cb8fb", "#1768ec"], music: ["#f0506e", "#5b7df5"],
  };
  return (
    <svg className="absolute size-0" aria-hidden="true">
      <defs>
        {Object.entries(grads).map(([id, [a, b]]) => (
          <linearGradient key={id} id={id} x1="0" y1="0" x2="0" y2="1"><stop offset="0" stopColor={a} /><stop offset="1" stopColor={b} /></linearGradient>
        ))}
      </defs>
    </svg>
  );
}

export default function App() {
  return (
    <div className="relative flex h-screen flex-col overflow-hidden bg-[#1a1a1a]">
      <Gradients />
      <MenuBar />
      <div className="flex min-h-0 flex-1 flex-col bg-[#3a5a70]">
        <div className="flex min-h-0 flex-1 flex-col overflow-hidden rounded-t-md border border-[#47484a] border-t-[#75787a]">
          <TabStrip />
          <AddressBar />
          <Grafana />
        </div>
      </div>
      <CodeWindow />
      <Dock />
    </div>
  );
}
